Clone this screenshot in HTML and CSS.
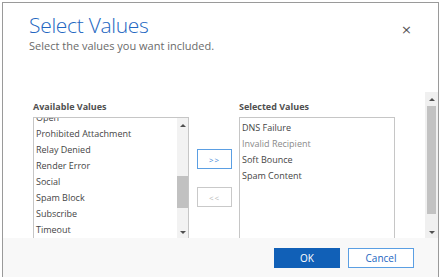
FILE: index.html
```html
<!DOCTYPE html>
<html lang="en">
<head>
  <meta charset="UTF-8" />
  <title>Select Values</title>
  <link rel="stylesheet" href="styles.css">
</head>
<body>
  <div class="dialog">
    <div class="dialog-head">
      <div class="head-text">
        <h1 class="title">Select Values</h1>
        <p class="subtitle">Select the values you want included.</p>
      </div>
      <button class="close-btn">&times;</button>
    </div>

    <div class="dialog-body">
      <div class="picker">
        <div class="column">
          <div class="col-label">Available Values</div>
          <div class="listbox">
            <ul class="items items-scrolled">
              <li>Open</li>
              <li>Prohibited Attachment</li>
              <li>Relay Denied</li>
              <li>Render Error</li>
              <li>Social</li>
              <li>Spam Block</li>
              <li>Subscribe</li>
              <li>Timeout</li>
            </ul>
            <div class="list-scroll">
              <span class="arrow up"></span>
              <div class="list-track"><div class="list-thumb"></div></div>
              <span class="arrow down"></span>
            </div>
          </div>
        </div>

        <div class="moves">
          <button class="move-btn active">&gt;&gt;</button>
          <button class="move-btn">&lt;&lt;</button>
        </div>

        <div class="column">
          <div class="col-label">Selected Values</div>
          <div class="listbox">
            <ul class="items">
              <li>DNS Failure</li>
              <li class="muted">Invalid Recipient</li>
              <li>Soft Bounce</li>
              <li>Spam Content</li>
            </ul>
          </div>
        </div>
      </div>

      <div class="page-scroll">
        <span class="arrow up"></span>
        <div class="page-track"><div class="page-thumb"></div></div>
        <span class="arrow down"></span>
      </div>
    </div>

    <div class="dialog-foot">
      <button class="btn btn-primary">OK</button>
      <button class="btn btn-secondary">Cancel</button>
    </div>
  </div>
</body>
</html>
```

FILE: styles.css
```css
html, body {
  margin: 0;
  height: 100%;
  overflow: hidden;
}

body {
  font-family: 'Open Sans', 'Noto Sans', sans-serif;
  background: #ffffff;
  color: #444;
  padding: 2px 2px 0 2px;
  box-sizing: border-box;
}

.dialog {
  height: 100%;
  border: 1px solid #9a9a9a;
  border-bottom: none;
  background: #fff;
  display: flex;
  flex-direction: column;
}

/* Header */
.dialog-head {
  height: 89px;
  display: flex;
  justify-content: space-between;
  align-items: flex-start;
  padding: 0 0 0 26px;
  flex-shrink: 0;
}

.title {
  margin: 8px 0 0;
  font-size: 21px;
  font-weight: 300;
  color: #2266c1;
  line-height: 28px;
  letter-spacing: -0.3px;
}

.subtitle {
  margin: 0;
  font-size: 11px;
  color: #6a6a6a;
  line-height: 14px;
}

.close-btn {
  margin: 17px 26px 0 0;
  border: none;
  background: transparent;
  color: #555;
  font-size: 13px;
  line-height: 20px;
  padding: 0;
  font-family: 'DejaVu Sans', sans-serif;
}

/* Scrolling body */
.dialog-body {
  height: 146px;
  display: flex;
  flex-shrink: 0;
  overflow: hidden;
}

.picker {
  flex: 1;
  display: flex;
  align-items: flex-start;
  padding: 8px 0 0 30px;
  gap: 8px;
}

.column {
  display: flex;
  flex-direction: column;
  gap: 3px;
}

.col-label {
  font-size: 9px;
  font-weight: bold;
  color: #505050;
  line-height: 14px;
}

.listbox {
  width: 156px;
  height: 124px;
  box-sizing: border-box;
  border: 1px solid #c6c6c6;
  display: flex;
  overflow: hidden;
}

.items {
  list-style: none;
  margin: 0;
  padding: 2px 0 0 2px;
  flex: 1;
  font-size: 9px;
  color: #454545;
}

.items li {
  height: 16px;
  line-height: 16px;
  white-space: nowrap;
}

.items-scrolled { margin-top: -10px; }

.items .muted { color: #8a8a8a; }

.list-scroll {
  width: 11px;
  background: #f2f2f2;
  display: flex;
  flex-direction: column;
  align-items: center;
}

.list-track {
  flex: 1;
  width: 100%;
  display: flex;
  flex-direction: column;
  padding-top: 43px;
  box-sizing: border-box;
}

.list-thumb {
  height: 32px;
  background: #c1c1c1;
}

.arrow {
  width: 0;
  height: 0;
  border-left: 3px solid transparent;
  border-right: 3px solid transparent;
  margin: 6px 0;
}

.arrow.up { border-bottom: 3px solid #505050; }
.arrow.down { border-top: 3px solid #505050; }

.moves {
  display: flex;
  flex-direction: column;
  gap: 18px;
  padding-top: 49px;
  margin-right: -1px;
}

.move-btn {
  width: 35px;
  height: 20px;
  padding: 0;
  background: #fff;
  border: 1px solid #c9c9c9;
  color: #b8b8b8;
  font-size: 8px;
  font-family: 'Open Sans', sans-serif;
  letter-spacing: 1px;
}

.move-btn.active {
  border-color: #5b9fe3;
  color: #3a86d6;
}

/* Outer scrollbar */
.page-scroll {
  width: 13px;
  background: #f0f0f0;
  display: flex;
  flex-direction: column;
  align-items: center;
}

.page-scroll .arrow { margin: 6px 0 5px; }

.page-track {
  flex: 1;
  width: 100%;
  padding: 0 2px 11px;
  box-sizing: border-box;
}

.page-thumb {
  height: 108px;
  background: #c2c2c2;
}

/* Footer */
.dialog-foot {
  flex: 1;
  background: #f8f8f8;
  display: flex;
  justify-content: flex-end;
  align-items: flex-start;
  gap: 8px;
  padding: 10px 24px 0 0;
}

.btn {
  width: 66px;
  height: 20px;
  padding: 0;
  font-size: 10px;
  font-family: 'Open Sans', sans-serif;
}

.btn-primary {
  background: #1160b7;
  border: 1px solid #1160b7;
  color: #fff;
}

.btn-secondary {
  background: #fff;
  border: 1px solid #5b9fe3;
  color: #2266c1;
}
```
